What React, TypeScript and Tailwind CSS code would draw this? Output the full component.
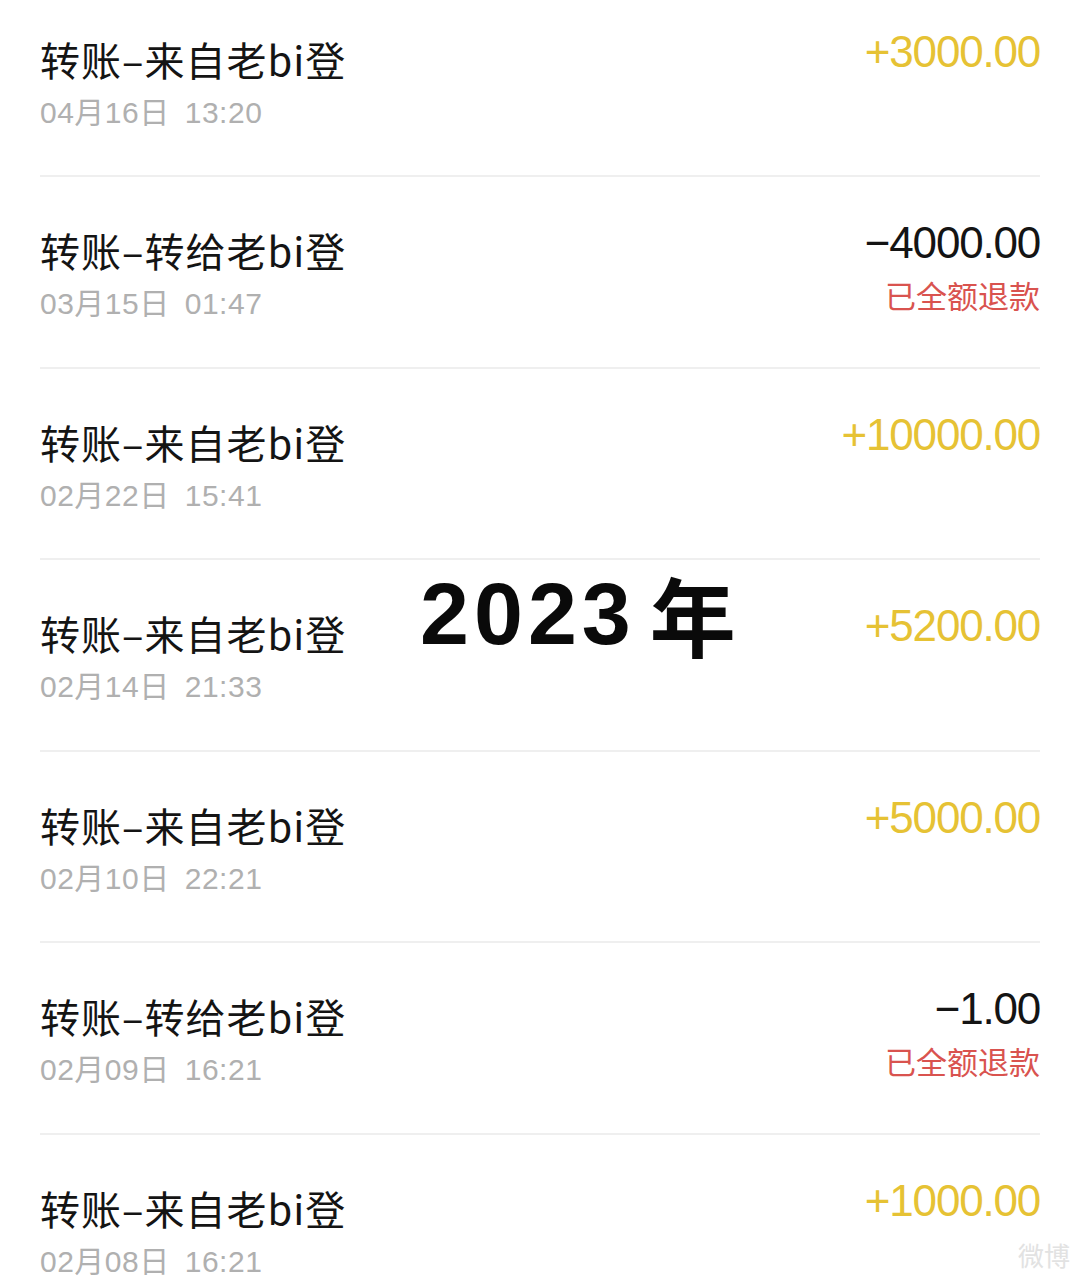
import React from "react";

interface Txn {
  kind: "in" | "out";
  day: string;
  time: string;
  amount: string;
  refunded?: boolean;
}

const txns: Txn[] = [
  { kind: "in", day: "04月16日", time: "13:20", amount: "+3000.00" },
  { kind: "out", day: "03月15日", time: "01:47", amount: "−4000.00", refunded: true },
  { kind: "in", day: "02月22日", time: "15:41", amount: "+10000.00" },
  { kind: "in", day: "02月14日", time: "21:33", amount: "+5200.00" },
  { kind: "in", day: "02月10日", time: "22:21", amount: "+5000.00" },
  { kind: "out", day: "02月09日", time: "16:21", amount: "−1.00", refunded: true },
  { kind: "in", day: "02月08日", time: "16:21", amount: "+1000.00" },
];

function Row({ t }: { t: Txn }) {
  return (
    <div className="flex h-[191.5px] shrink-0 justify-between border-b-2 border-[#efefef]">
      <div className="flex flex-col pt-[50px]">
        <div className="font-['Noto_Sans_CJK_SC',sans-serif] text-[40px] leading-[46px] tracking-[1px] text-[#141414]">
          转账–{t.kind === "in" ? "来自" : "转给"}老bi登
        </div>
        <div className="mt-[13px] flex font-['Liberation_Sans','Noto_Sans_CJK_SC',sans-serif] text-[30px] leading-[36px] tracking-[0.5px] text-[#b0b0b0]">
          <span>{t.day}</span>
          <span className="ml-[15px]">{t.time}</span>
        </div>
      </div>
      <div className="flex flex-col items-end pt-[41px]">
        <div
          className={`font-['Liberation_Sans',sans-serif] text-[44px] leading-[50px] tracking-[-1.2px] ${
            t.kind === "in" ? "text-[#e6c234]" : "text-[#141414]"
          }`}
        >
          {t.amount}
        </div>
        {t.refunded && (
          <div className="mt-[8px] font-['Noto_Sans_CJK_SC',sans-serif] text-[31px] leading-[38px] text-[#d9534f]">
            已全额退款
          </div>
        )}
      </div>
    </div>
  );
}

export default function App() {
  return (
    <div className="relative h-[1282px] w-[1080px] overflow-hidden bg-white">
      <div className="mt-[-14.5px] flex flex-col px-[40px]">
        {txns.map((t, i) => (
          <Row key={i} t={t} />
        ))}
      </div>

      {/* year label on top of the list */}
      <div className="absolute left-[420px] top-[570px] flex items-center text-[#0a0a0a]">
        <span className="font-['Liberation_Sans',sans-serif] text-[88px] font-bold leading-[88px] tracking-[5px]">
          2023
        </span>
        <span className="ml-[14px] font-['Noto_Sans_CJK_SC',sans-serif] text-[86px] font-bold leading-[86px]">
          年
        </span>
      </div>

      {/* faint watermark */}
      <div className="absolute bottom-[8px] right-[10px] font-['Noto_Sans_CJK_SC',sans-serif] text-[26px] text-[#e2e2e2]">
        微博
      </div>
    </div>
  );
}
